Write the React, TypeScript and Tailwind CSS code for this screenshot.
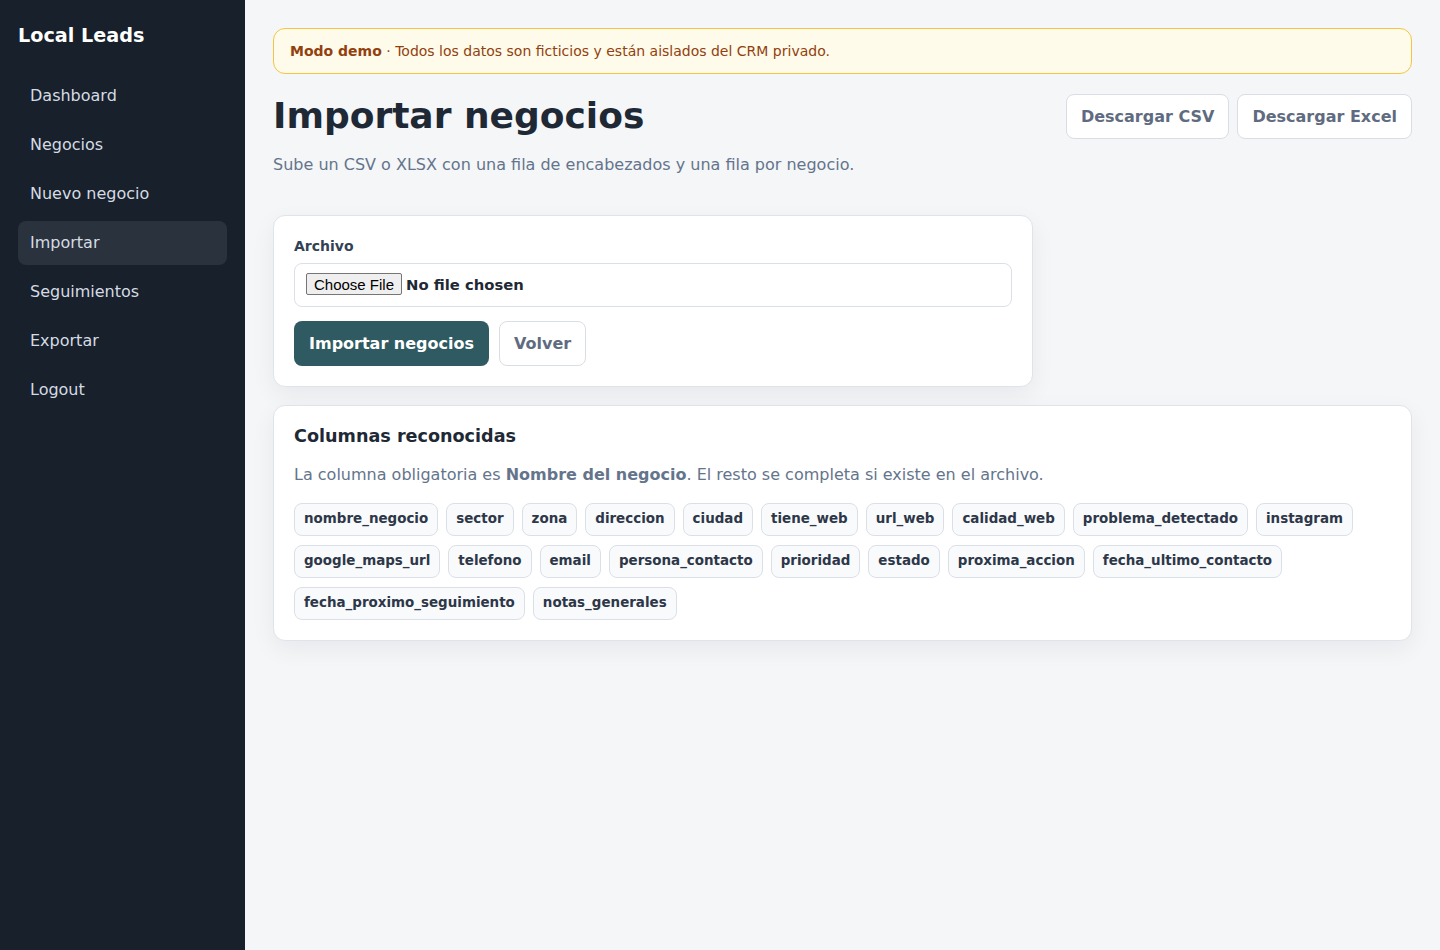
const NAV = ['Dashboard', 'Negocios', 'Nuevo negocio', 'Importar', 'Seguimientos', 'Exportar', 'Logout']

const COLUMNS = [
  'nombre_negocio', 'sector', 'zona', 'direccion', 'ciudad', 'tiene_web', 'url_web', 'calidad_web',
  'problema_detectado', 'instagram', 'google_maps_url', 'telefono', 'email', 'persona_contacto',
  'prioridad', 'estado', 'proxima_accion', 'fecha_ultimo_contacto', 'fecha_proximo_seguimiento',
  'notas_generales'
]

export default function App() {
  return (
    <div className="flex min-h-[950px] bg-[#f4f6f8] font-['DejaVu_Sans',sans-serif]">
      <aside className="w-[245px] flex-shrink-0 bg-[#17202b] px-[18px] pt-[23px]">
        <div className="mb-[25px] text-[19.2px] font-bold leading-[26px] text-white">Local Leads</div>
        <nav className="flex flex-col gap-[5px]">
          {NAV.map(n => (
            <a
              key={n}
              href="#"
              className={
                'flex h-[44px] items-center rounded-lg px-3 text-[16px] text-[#d5dbe3] ' +
                (n === 'Importar' ? 'bg-[#29323d]' : '')
              }
            >
              {n}
            </a>
          ))}
        </nav>
      </aside>

      <main className="flex-1 px-[28px] pt-[28px]">
        <div className="rounded-xl border border-[#f5c542] bg-[#fefbea] px-4 py-[13px] text-[14px] leading-[18px] text-[#92400e]">
          <span className="font-bold">Modo demo</span> · Todos los datos son ficticios y están aislados del CRM privado.
        </div>

        <div className="mt-[20px] flex items-start justify-between">
          <div>
            <h1 className="text-[36px] font-bold leading-[44px] text-[#1e2935]">Importar negocios</h1>
            <p className="mt-[15px] text-[16px] text-[#64748b]">
              Sube un CSV o XLSX con una fila de encabezados y una fila por negocio.
            </p>
          </div>
          <div className="flex gap-2">
            <button className="h-[45px] rounded-lg border border-[#d9dee6] bg-white px-[14px] text-[16px] font-bold text-[#5f6b80]">
              Descargar CSV
            </button>
            <button className="h-[45px] rounded-lg border border-[#d9dee6] bg-white px-[14px] text-[16px] font-bold text-[#5f6b80]">
              Descargar Excel
            </button>
          </div>
        </div>

        <section className="mt-[38px] w-[760px] rounded-xl border border-[#dfe3ea] bg-white p-5 shadow-[0_8px_24px_rgba(15,23,42,0.06)]">
          <label className="block text-[14px] font-bold leading-[20px] text-[#334155]">Archivo</label>
          <div className="mt-[7px] flex h-[44px] items-center rounded-lg border border-[#dbe0e8] px-[11px]">
            <input
              type="file"
              className="text-[14.8px] font-bold text-[#1e2935] file:mr-[4px] file:h-[22px] file:rounded-[2px] file:border file:border-solid file:border-[#767676] file:bg-[#efefef] file:px-[7px] file:font-['Liberation_Sans',sans-serif] file:text-[15px] file:font-normal file:text-black"
            />
          </div>
          <div className="mt-[14px] flex gap-[10px]">
            <button className="h-[45px] rounded-lg bg-[#2f5a61] px-[15px] text-[16px] font-bold text-white">
              Importar negocios
            </button>
            <button className="h-[45px] rounded-lg border border-[#d9dee6] bg-white px-[14px] text-[16px] font-bold text-[#5f6b80]">
              Volver
            </button>
          </div>
        </section>

        <section className="mt-[18px] rounded-xl border border-[#dfe3ea] bg-white p-5 shadow-[0_8px_24px_rgba(15,23,42,0.06)]">
          <h2 className="text-[17.6px] font-bold leading-[20px] text-[#1e2935]">Columnas reconocidas</h2>
          <p className="mt-[17px] text-[16px] leading-[24px] text-[#64748b]">
            La columna obligatoria es <strong className="font-bold">Nombre del negocio</strong>. El resto se completa si existe en el archivo.
          </p>
          <div className="mt-[16px] flex flex-wrap gap-x-2 gap-y-[9px]">
            {COLUMNS.map(c => (
              <span
                key={c}
                className="flex h-[33px] items-center rounded-lg border border-[#dbe0e8] bg-[#f8fafc] px-[9px] text-[13.45px] font-bold text-[#2d3748]"
              >
                {c}
              </span>
            ))}
          </div>
        </section>
      </main>
    </div>
  )
}
